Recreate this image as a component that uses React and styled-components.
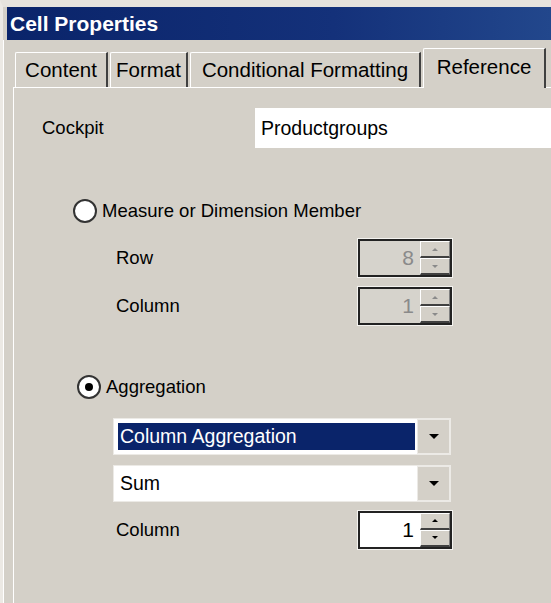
import React from 'react';
import styled, { createGlobalStyle } from 'styled-components';

const GlobalStyle = createGlobalStyle`
  html, body {
    margin: 0;
    padding: 0;
    background: #d4d0c8;
    overflow: hidden;
  }
  body {
    font-family: 'Liberation Sans', Arial, sans-serif;
  }
`;

const Window = styled.div`
  width: 551px;
  height: 603px;
  box-sizing: border-box;
  background: #d4d0c8;
  border-top: 7px solid #e6e3dd;
  border-left: 3px solid #ece9e4;
  display: flex;
  flex-direction: column;
  overflow: hidden;
`;

const TitleBar = styled.div`
  height: 33px;
  margin-left: 4px;
  background: linear-gradient(to right, #0a246a 0%, #14317a 60%, #22478c 100%);
  color: #fff;
  font-weight: bold;
  font-size: 21px;
  display: flex;
  align-items: center;
  padding-left: 3px;
`;

const Body = styled.div`
  flex: 1;
  display: flex;
  flex-direction: column;
  border-left: 1px solid #fff;
  padding-left: 9px;
  padding-top: 7px;
`;

const TabStrip = styled.div`
  display: flex;
  align-items: flex-end;
  height: 40px;
  padding-left: 2px;
`;

const Tab = styled.div`
  width: ${(p) => p.$w}px;
  height: ${(p) => (p.$active ? '40px' : '35px')};
  box-sizing: border-box;
  margin-bottom: ${(p) => (p.$active ? '-1px' : '0')};
  background: #d4d0c8;
  border-top: 1px solid #fff;
  border-left: 1px solid #fff;
  border-right: 2px solid #404040;
  border-top-left-radius: 2px;
  font-size: 20.5px;
  color: #000;
  display: flex;
  justify-content: center;
  align-items: ${(p) => (p.$active ? 'flex-start' : 'center')};
  padding-top: ${(p) => (p.$active ? '6px' : '0')};
  margin-right: ${(p) => (p.$active ? '0' : '2px')};
  position: relative;
  z-index: ${(p) => (p.$active ? 2 : 1)};
  white-space: nowrap;
`;

const Panel = styled.div`
  flex: 1;
  border-top: 1px solid #fff;
  border-left: 1px solid #fff;
  padding: 20px 0 0 28px;
  display: flex;
  flex-direction: column;
`;

const Row = styled.div`
  display: flex;
  align-items: center;
  height: ${(p) => p.$h || 40}px;
  margin-top: ${(p) => p.$mt || 0}px;
  padding-left: ${(p) => p.$indent || 0}px;
  font-size: 18.5px;
  color: #000;
`;

const Label = styled.div`
  width: ${(p) => p.$w}px;
  flex-shrink: 0;
`;

const TextBox = styled.div`
  flex: 1;
  height: 40px;
  background: #fff;
  display: flex;
  align-items: center;
  padding-left: 6px;
  font-size: 19.5px;
`;

const RadioCircle = styled.span`
  width: 20px;
  height: 20px;
  border-radius: 50%;
  border: 2px solid #333;
  background: #fff;
  display: inline-flex;
  align-items: center;
  justify-content: center;
  margin-right: 5px;
  flex-shrink: 0;

  &::after {
    content: '';
    width: 8px;
    height: 8px;
    border-radius: 50%;
    background: ${(p) => (p.$checked ? '#000' : 'transparent')};
  }
`;

const Spin = styled.div`
  margin-left: ${(p) => p.$ml}px;
  width: 94px;
  height: 38px;
  box-sizing: border-box;
  border: 2px solid #222;
  outline: 1px solid #f4f3f0;
  display: flex;
  background: ${(p) => (p.$disabled ? '#d6d3cc' : '#fff')};
`;

const SpinValue = styled.div`
  flex: 1;
  display: flex;
  align-items: center;
  justify-content: flex-end;
  padding-right: 6px;
  font-size: 21px;
  color: ${(p) => (p.$disabled ? '#8a8a8a' : '#000')};
`;

const SpinButtons = styled.div`
  width: 30px;
  display: flex;
  flex-direction: column;
`;

const SpinButton = styled.div`
  flex: 1;
  background: #d4d0c8;
  border-top: 1px solid #fff;
  border-left: 1px solid #fff;
  border-right: 1px solid #808080;
  border-bottom: 2px solid #404040;
  display: flex;
  align-items: center;
  justify-content: center;

  &::after {
    content: '';
    border-left: 3px solid transparent;
    border-right: 3px solid transparent;
    ${(p) => (p.$up ? 'border-bottom' : 'border-top')}: 3px solid ${(p) => (p.$disabled ? '#8a8a8a' : '#000')};
  }
`;

const Combo = styled.div`
  width: 338px;
  height: 37px;
  box-sizing: border-box;
  border: 1px solid #eceae6;
  background: #fff;
  display: flex;
  padding: 4px 2px 4px 4px;
  font-size: 19.5px;
`;

const ComboText = styled.div`
  flex: 1;
  display: flex;
  align-items: center;
  padding-left: 2px;
  margin-right: 2px;
  background: ${(p) => (p.$selected ? '#0a246a' : 'transparent')};
  color: ${(p) => (p.$selected ? '#fff' : '#000')};
`;

const ComboButton = styled.div`
  width: 31px;
  margin: -4px -2px -4px 0;
  background: #d4d0c8;
  border: 1px solid #eceae6;
  display: flex;
  align-items: center;
  justify-content: center;

  &::after {
    content: '';
    border-left: 5px solid transparent;
    border-right: 5px solid transparent;
    border-top: 5px solid #000;
  }
`;

const Spinner = ({ value, disabled, ml }) => (
  <Spin $disabled={disabled} $ml={ml}>
    <SpinValue $disabled={disabled}>{value}</SpinValue>
    <SpinButtons>
      <SpinButton $up $disabled={disabled} />
      <SpinButton $disabled={disabled} />
    </SpinButtons>
  </Spin>
);

const tabs = [
  { label: 'Content', w: 93 },
  { label: 'Format', w: 78 },
  { label: 'Conditional Formatting', w: 231 },
  { label: 'Reference', w: 123, active: true },
];

const App = () => (
  <>
    <GlobalStyle />
    <Window>
      <TitleBar>Cell Properties</TitleBar>
      <Body>
        <TabStrip>
          {tabs.map((t) => (
            <Tab key={t.label} $w={t.w} $active={t.active}>{t.label}</Tab>
          ))}
        </TabStrip>
        <Panel>
          <Row $h={40}>
            <Label $w={213}>Cockpit</Label>
            <TextBox>Productgroups</TextBox>
          </Row>

          <Row $h={30} $mt={48} $indent={31}>
            <RadioCircle />
            Measure or Dimension Member
          </Row>
          <Row $h={38} $mt={13} $indent={74}>
            <Label $w={0}>Row</Label>
            <Spinner value="8" disabled ml={242} />
          </Row>
          <Row $h={38} $mt={10} $indent={74}>
            <Label $w={0}>Column</Label>
            <Spinner value="1" disabled ml={242} />
          </Row>

          <Row $h={30} $mt={47} $indent={35}>
            <RadioCircle $checked />
            Aggregation
          </Row>
          <Row $h={37} $mt={16} $indent={71}>
            <Combo>
              <ComboText $selected>Column Aggregation</ComboText>
              <ComboButton />
            </Combo>
          </Row>
          <Row $h={37} $mt={10} $indent={71}>
            <Combo>
              <ComboText>Sum</ComboText>
              <ComboButton />
            </Combo>
          </Row>
          <Row $h={39} $mt={8} $indent={74}>
            <Label $w={0}>Column</Label>
            <Spinner value="1" ml={242} />
          </Row>
        </Panel>
      </Body>
    </Window>
  </>
);

export default App;
